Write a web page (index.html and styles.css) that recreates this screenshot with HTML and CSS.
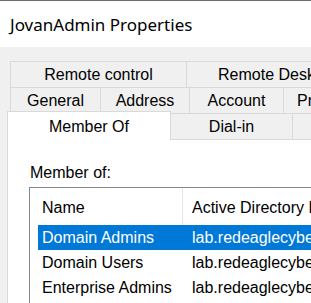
FILE: index.html
```html
<!DOCTYPE html>
<html lang="en">
<head>
    <meta charset="UTF-8">
    <title>JovanAdmin Properties</title>
    <link rel="stylesheet" href="styles.css">
</head>
<body>
    <div class="titlebar">JovanAdmin Properties</div>

    <div class="dialog">
        <div class="tabs">
            <div class="tab-row">
                <div class="tab w-remote">Remote control</div>
                <div class="tab w-wide pad-rd">Remote Desktop Services Profile</div>
            </div>
            <div class="tab-row">
                <div class="tab w-general">General</div>
                <div class="tab w-address">Address</div>
                <div class="tab w-account">Account</div>
                <div class="tab w-wide pad-p">Profile</div>
            </div>
            <div class="tab-row">
                <div class="tab selected w-member">Member Of</div>
                <div class="tab w-dialin">Dial-in</div>
                <div class="tab w-wide pad-env">Environment</div>
            </div>
        </div>

        <div class="panel">
            <div class="label">Member of:</div>
            <div class="listview">
                <div class="lv-header">
                    <div class="col-name">Name</div>
                    <div class="col-folder">Active Directory Domain Services Folder</div>
                </div>
                <div class="lv-row active">
                    <div class="col-name">Domain Admins</div>
                    <div class="col-folder">lab.redeaglecyber.com/Users</div>
                </div>
                <div class="lv-row">
                    <div class="col-name">Domain Users</div>
                    <div class="col-folder">lab.redeaglecyber.com/Users</div>
                </div>
                <div class="lv-row">
                    <div class="col-name">Enterprise Admins</div>
                    <div class="col-folder">lab.redeaglecyber.com/Users</div>
                </div>
            </div>
        </div>
    </div>
</body>
</html>
```

FILE: styles.css
```css
* {
    box-sizing: border-box;
}
body {
    margin: 0;
    width: 311px;
    height: 303px;
    overflow: hidden;
    background-color: #f0f0f0;
    font-family: "Liberation Sans", Arial, sans-serif;
    font-size: 16px;
    color: #000;
}
.titlebar {
    height: 47px;
    border-top: 1px solid #6e6e6e;
    background-color: #fff;
    padding-left: 10px;
    padding-top: 12px;
    font-family: "Noto Sans", "Open Sans", sans-serif;
    font-size: 17px;
    line-height: 24px;
    color: #000;
    white-space: nowrap;
}
.dialog {
    padding-top: 14px;
}
.tabs {
    padding-left: 10px;
}
.tab-row {
    display: flex;
    height: 26px;
    white-space: nowrap;
}
.tab {
    flex: none;
    height: 26px;
    border: 1px solid #d9d9d9;
    border-bottom: none;
    margin-right: -1px;
    background-color: #f0f0f0;
    text-align: center;
    line-height: 26px;
    overflow: hidden;
}
.tab.selected {
    position: relative;
    z-index: 1;
    height: 29px;
    margin-top: -2px;
    margin-left: -3px;
    background-color: #fff;
    line-height: 30px;
}
.w-remote { width: 177px; }
.w-general { width: 91px; }
.w-address { width: 90px; }
.w-account { width: 95px; }
.w-member { width: 164px; }
.w-dialin { width: 123px; }
.w-wide {
    width: 260px;
    text-align: left;
}
.pad-rd { padding-left: 31px; }
.pad-p { padding-left: 13px; }
.pad-env { padding-left: 40px; }

.panel {
    margin-left: 7px;
    width: 340px;
    height: 200px;
    border: 1px solid #d9d9d9;
    background-color: #fff;
    padding: 24px 0 0 21px;
}
.label {
    padding-left: 1px;
    line-height: 18px;
}
.listview {
    margin-top: 5px;
    width: 320px;
    height: 140px;
    border: 1px solid #828790;
    padding-left: 8px;
    white-space: nowrap;
}
.lv-header,
.lv-row {
    display: flex;
}
.lv-header {
    height: 37px;
}
.lv-header .col-name {
    border-right: 1px solid #e5e5e5;
}
.lv-header > div {
    line-height: 39px;
}
.lv-row {
    height: 25px;
    line-height: 25px;
}
.lv-row.active {
    background-color: #0078d7;
    color: #fff;
}
.col-name {
    flex: none;
    width: 145px;
    padding-left: 4px;
}
.col-folder {
    flex: none;
    padding-left: 9px;
}
```
